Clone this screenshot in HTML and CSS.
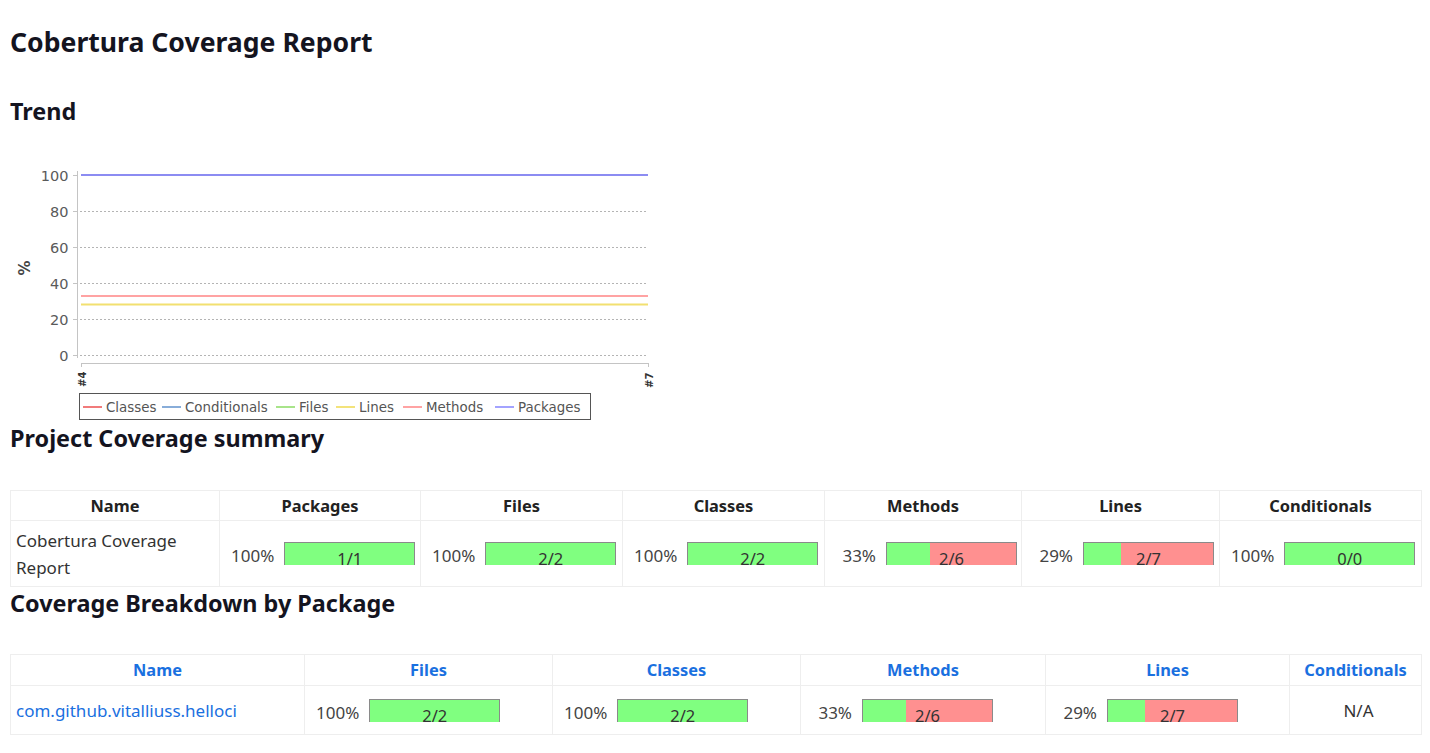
FILE: index.html
```html
<!DOCTYPE html>
<html lang="en">
<head>
<meta charset="utf-8">
<title>Cobertura Coverage Report</title>
<link rel="stylesheet" href="styles.css">
</head>
<body>
<main class="page">
  <h1 class="title">Cobertura Coverage Report</h1>

  <h2 class="section trend-title">Trend</h2>
  <svg class="trend-chart" width="650" height="295" viewBox="10 127 650 295" xmlns="http://www.w3.org/2000/svg">
    <rect x="10" y="127" width="650" height="295" fill="#fff"/>
    <!-- grid -->
    <g stroke="#b4b4b4" stroke-width="1" stroke-dasharray="2 2">
      <line x1="80" y1="211.5" x2="648" y2="211.5"/>
      <line x1="80" y1="247.5" x2="648" y2="247.5"/>
      <line x1="80" y1="283.5" x2="648" y2="283.5"/>
      <line x1="80" y1="319.5" x2="648" y2="319.5"/>
      <line x1="80" y1="355.5" x2="648" y2="355.5"/>
    </g>
    <!-- axes -->
    <g stroke="#c4c4c4" stroke-width="1">
      <line x1="77.5" y1="171" x2="77.5" y2="358"/>
      <line x1="73" y1="175.5" x2="77.5" y2="175.5"/>
      <line x1="73" y1="211.5" x2="77.5" y2="211.5"/>
      <line x1="73" y1="247.5" x2="77.5" y2="247.5"/>
      <line x1="73" y1="283.5" x2="77.5" y2="283.5"/>
      <line x1="73" y1="319.5" x2="77.5" y2="319.5"/>
      <line x1="73" y1="355.5" x2="77.5" y2="355.5"/>
      <line x1="81" y1="363.5" x2="649" y2="363.5"/>
      <line x1="81.5" y1="363.5" x2="81.5" y2="367"/>
      <line x1="648.5" y1="363.5" x2="648.5" y2="367"/>
    </g>
    <g class="tick-label" text-anchor="end">
      <text x="68.5" y="180.5">100</text>
      <text x="68.5" y="216.5">80</text>
      <text x="68.5" y="252.5">60</text>
      <text x="68.5" y="288.5">40</text>
      <text x="68.5" y="324.5">20</text>
      <text x="68.5" y="360.5">0</text>
    </g>
    <text class="axis-label" transform="translate(30 268) rotate(-90)" text-anchor="middle">%</text>
    <text class="x-label" transform="translate(86 387) rotate(-90)">#4</text>
    <text class="x-label" transform="translate(653 388) rotate(-90)">#7</text>
    <!-- series -->
    <line x1="81" y1="175" x2="648" y2="175" stroke="#8c8cf2" stroke-width="2"/>
    <line x1="81" y1="296" x2="648" y2="296" stroke="#ffa3a3" stroke-width="2"/>
    <line x1="81" y1="304.5" x2="648" y2="304.5" stroke="#f2e070" stroke-width="2"/>
    <!-- legend -->
    <rect x="79.5" y="393.5" width="511" height="26" fill="#fff" stroke="#555" stroke-width="1"/>
    <g stroke-width="1.6">
      <line x1="83" y1="407" x2="102" y2="407" stroke="#ee5a5a"/>
      <line x1="162" y1="407" x2="181" y2="407" stroke="#6a98d0"/>
      <line x1="276" y1="407" x2="295" y2="407" stroke="#92de6c"/>
      <line x1="336" y1="407" x2="355" y2="407" stroke="#f0dc5a"/>
      <line x1="403" y1="407" x2="422" y2="407" stroke="#ff8c8c"/>
      <line x1="495" y1="407" x2="514" y2="407" stroke="#8c8cff"/>
    </g>
    <g class="legend-label">
      <text x="106" y="412">Classes</text>
      <text x="185" y="412">Conditionals</text>
      <text x="299" y="412">Files</text>
      <text x="359" y="412">Lines</text>
      <text x="426" y="412">Methods</text>
      <text x="518" y="412">Packages</text>
    </g>
  </svg>

  <h2 class="section">Project Coverage summary</h2>
  <table class="cov-table summary">
    <colgroup>
      <col style="width:209px"><col style="width:201px"><col style="width:202px"><col style="width:202px"><col style="width:197px"><col style="width:198px"><col style="width:202px">
    </colgroup>
    <thead>
      <tr><th>Name</th><th>Packages</th><th>Files</th><th>Classes</th><th>Methods</th><th>Lines</th><th>Conditionals</th></tr>
    </thead>
    <tbody>
      <tr>
        <td class="name-cell">Cobertura Coverage Report</td>
        <td><div class="metric"><span class="pct">100%</span><div class="bar" style="--p:100%"><span class="ratio">1/1</span></div></div></td>
        <td><div class="metric"><span class="pct">100%</span><div class="bar" style="--p:100%"><span class="ratio">2/2</span></div></div></td>
        <td><div class="metric"><span class="pct">100%</span><div class="bar" style="--p:100%"><span class="ratio">2/2</span></div></div></td>
        <td><div class="metric"><span class="pct">33%</span><div class="bar" style="--p:33.3%"><span class="ratio">2/6</span></div></div></td>
        <td><div class="metric"><span class="pct">29%</span><div class="bar" style="--p:28.6%"><span class="ratio">2/7</span></div></div></td>
        <td><div class="metric"><span class="pct">100%</span><div class="bar" style="--p:100%"><span class="ratio">0/0</span></div></div></td>
      </tr>
    </tbody>
  </table>

  <h2 class="section">Coverage Breakdown by Package</h2>
  <table class="cov-table breakdown">
    <colgroup>
      <col style="width:294px"><col style="width:248px"><col style="width:248px"><col style="width:245px"><col style="width:244px"><col style="width:132px">
    </colgroup>
    <thead>
      <tr><th><a href="#">Name</a></th><th><a href="#">Files</a></th><th><a href="#">Classes</a></th><th><a href="#">Methods</a></th><th><a href="#">Lines</a></th><th><a href="#">Conditionals</a></th></tr>
    </thead>
    <tbody>
      <tr>
        <td class="name-cell"><a href="#">com.github.vitalliuss.helloci</a></td>
        <td><div class="metric"><span class="pct">100%</span><div class="bar" style="--p:100%"><span class="ratio">2/2</span></div></div></td>
        <td><div class="metric"><span class="pct">100%</span><div class="bar" style="--p:100%"><span class="ratio">2/2</span></div></div></td>
        <td><div class="metric"><span class="pct">33%</span><div class="bar" style="--p:33.3%"><span class="ratio">2/6</span></div></div></td>
        <td><div class="metric"><span class="pct">29%</span><div class="bar" style="--p:28.6%"><span class="ratio">2/7</span></div></div></td>
        <td class="na">N/A</td>
      </tr>
    </tbody>
  </table>
</main>
</body>
</html>
```

FILE: styles.css
```css
html, body {
  margin: 0;
  padding: 0;
  background: #fff;
}

body {
  font-family: "Noto Sans", "Open Sans", sans-serif;
  font-size: 16px;
  color: #333;
}

.page {
  padding: 0 9px 0 10px;
}

.title {
  margin: 22px 0 0;
  font-size: 26.6px;
  line-height: 40px;
  font-weight: 700;
  color: #14141f;
}

.section {
  margin: 0;
  font-size: 23.4px;
  line-height: 32px;
  font-weight: 700;
  color: #14141f;
}

.trend-title {
  margin-top: 33px;
}

.trend-chart {
  display: block;
}

.tick-label text {
  font-family: "DejaVu Sans", sans-serif;
  font-size: 14.5px;
  fill: #5a5a5a;
}

.axis-label {
  font-family: "DejaVu Sans", sans-serif;
  font-size: 15px;
  font-weight: 700;
  fill: #444;
}

.x-label {
  font-family: "DejaVu Sans", sans-serif;
  font-size: 10px;
  font-weight: 700;
  fill: #333;
}

.legend-label text {
  font-family: "DejaVu Sans", sans-serif;
  font-size: 13.4px;
  fill: #555;
}

.cov-table {
  width: 100%;
  table-layout: fixed;
  border-collapse: collapse;
  margin-top: 36px;
}

.cov-table th,
.cov-table td {
  border: 1px solid #eeeeee;
}

.cov-table th {
  font-size: 16.4px;
  font-weight: 700;
  text-align: center;
  color: #222;
  line-height: 24px;
  padding: 3px 5px 2px;
}

.cov-table td {
  padding: 0 5px 0 11px;
  font-size: 17px;
  line-height: 27px;
  color: #333;
}

.cov-table td.name-cell {
  padding-left: 5px;
}

.summary td {
  height: 65px;
}

.breakdown {
  margin-top: 35px;
}

.breakdown th {
  padding: 3px 5px 3px;
}

.breakdown td {
  height: 48px;
}

.cov-table a {
  color: #1a70e0;
  text-decoration: none;
}

.name-cell {
  text-align: left;
}

.na {
  text-align: center;
}

.metric {
  display: flex;
  align-items: center;
  gap: 10px;
}

.pct {
  min-width: 40px;
  flex: none;
  text-align: right;
  color: #444;
  position: relative;
  top: 2px;
}

.bar {
  flex: none;
  width: 129px;
  height: 17px;
  padding-top: 5px;
  border: 1px solid #8a8a8a;
  border-bottom: 0;
  background: linear-gradient(to right, #80ff80 var(--p), #ff9090 var(--p));
  text-align: center;
  font-size: 16.5px;
  line-height: 22px;
  color: #333;
}

.ratio {
  display: block;
}
```
